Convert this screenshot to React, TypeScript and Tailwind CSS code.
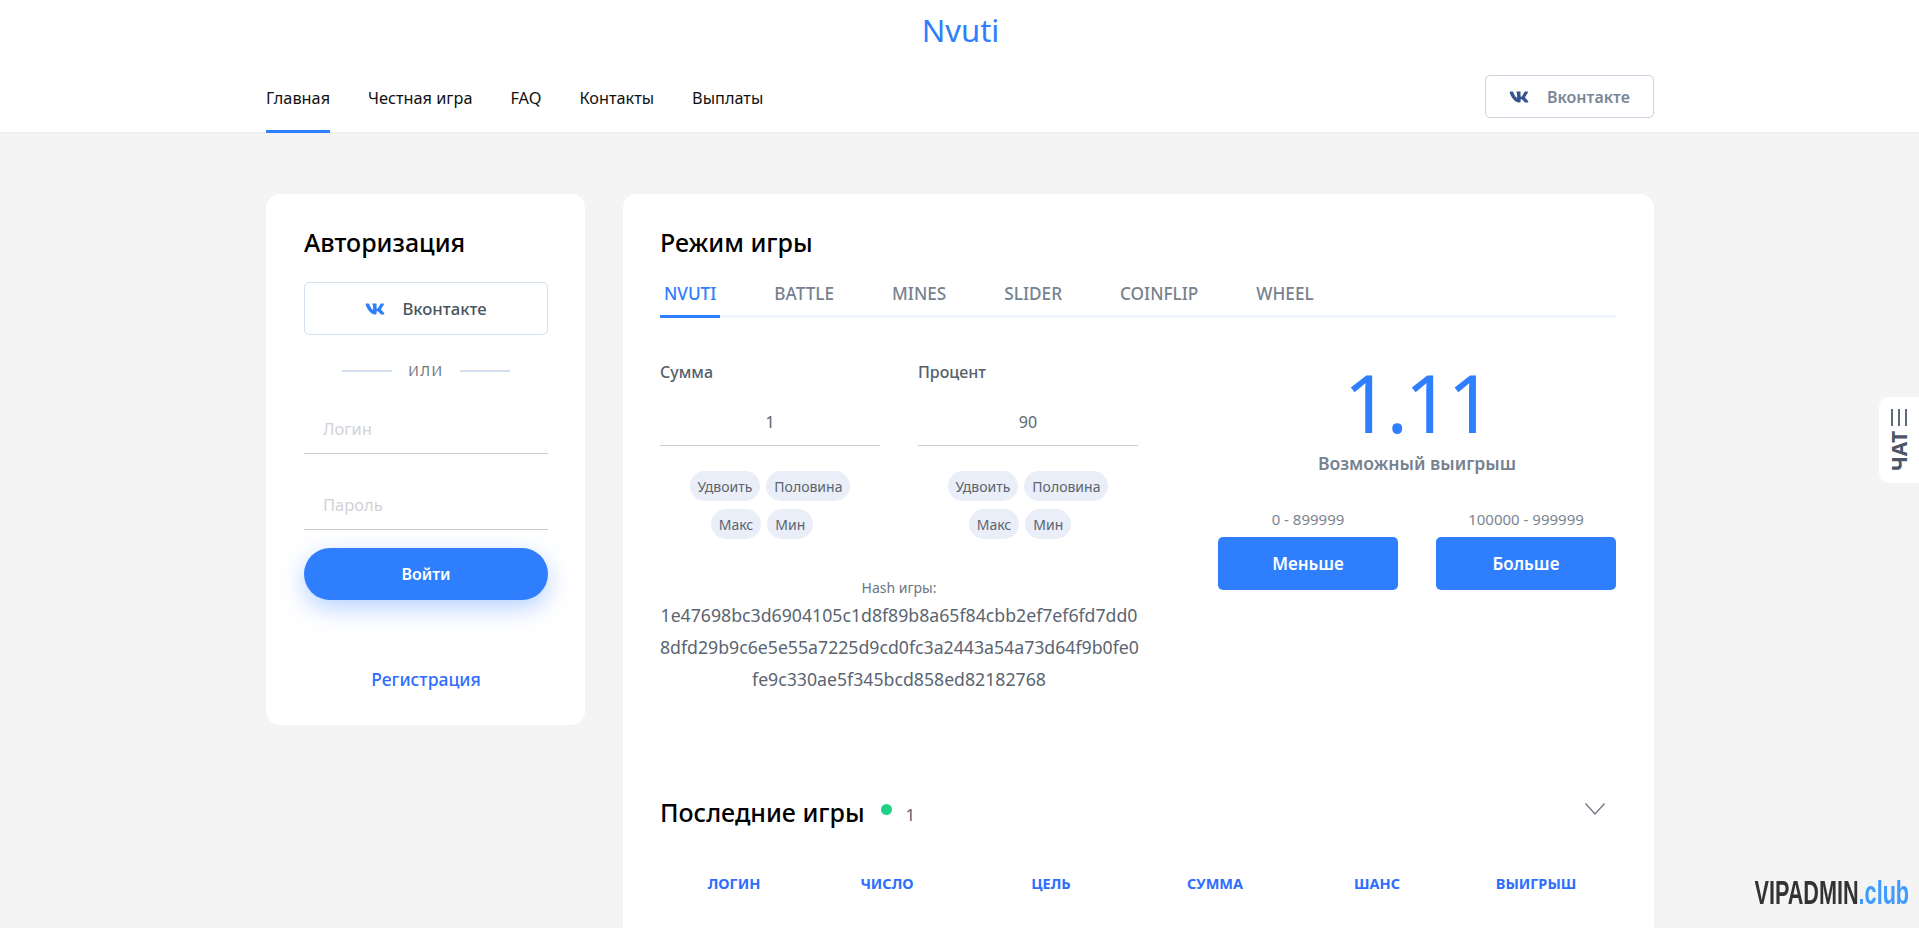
import React from 'react';
import { FaVk } from 'react-icons/fa';

const navItems = ['Главная', 'Честная игра', 'FAQ', 'Контакты', 'Выплаты'];
const tabs = ['NVUTI', 'BATTLE', 'MINES', 'SLIDER', 'COINFLIP', 'WHEEL'];
const hashLines = [
  '1e47698bc3d6904105c1d8f89b8a65f84cbb2ef7ef6fd7dd0',
  '8dfd29b9c6e5e55a7225d9cd0fc3a2443a54a73d64f9b0fe0',
  'fe9c330ae5f345bcd858ed82182768',
];

const Chip = ({ label }: { label: string }) => (
  <button className="h-[30px] rounded-full bg-[#e9eef8] px-[8px] text-[14px] text-[#5b6470]">{label}</button>
);

const AmountField = ({ label, value }: { label: string; value: string }) => (
  <div className="w-[220px]">
    <div className="h-[24px] text-[16px] font-medium leading-[24px] text-[#55606b]">{label}</div>
    <div className="mt-[14px] h-[48px] border-b border-[#cccccc] text-center text-[16px] leading-[48px] text-[#5b6470]">{value}</div>
    <div className="mt-[25px] flex flex-col items-center gap-[8px]">
      <div className="flex gap-[6px]">
        <Chip label="Удвоить" />
        <Chip label="Половина" />
      </div>
      <div className="mr-[16px] flex gap-[6px]">
        <Chip label="Макс" />
        <Chip label="Мин" />
      </div>
    </div>
  </div>
);

const BetColumn = ({ range, label }: { range: string; label: string }) => (
  <div className="w-[180px] text-center">
    <div className="h-[20px] text-[15px] leading-[20px] text-[#7b8591]">{range}</div>
    <button className="mt-[8px] h-[53px] w-full rounded-[5px] bg-[#2e7efe] text-[17px] font-semibold text-white">{label}</button>
  </div>
);

const App: React.FC = () => {
  return (
    <div className="h-[928px] overflow-hidden bg-[#f4f4f4] font-['Noto_Sans','Open_Sans',sans-serif]">
      <header className="h-[133px] border-b border-[#eeeeee] bg-white">
        <div className="pl-[2px] pt-[10px] text-center text-[31px] leading-[40px] text-[#2e7efe]">Nvuti</div>
        <div className="ml-[266px] mt-[25px] flex w-[1388px] items-start justify-between">
          <nav className="flex gap-[38px]">
            {navItems.map((item, i) => (
              <a key={item} className={`h-[58px] pt-[11px] text-[16.3px] leading-[24px] text-[#111111] ${i === 0 ? 'border-b-[3px] border-[#2e7efe]' : ''}`}>
                {item}
              </a>
            ))}
          </nav>
          <button className="flex h-[43px] w-[169px] items-center justify-center gap-[18px] rounded-[5px] border border-[#cbd0dc] text-[16px] font-semibold text-[#7a8798]">
            <FaVk className="text-[20px] text-[#36558f]" />
            Вконтакте
          </button>
        </div>
      </header>

      <main className="ml-[266px] mt-[61px] flex w-[1388px] items-start gap-[38px]">
        <aside className="h-[531px] w-[319px] shrink-0 rounded-[14px] bg-white pl-[38px] pr-[37px] pt-[31px]">
          <h2 className="text-[25px] font-medium leading-[34px] text-black">Авторизация</h2>
          <button className="mt-[23px] flex h-[53px] w-full items-center justify-center gap-[17px] rounded-[5px] border border-[#d3dfec] text-[16.7px] font-medium text-[#4a5560]">
            <FaVk className="text-[20px] text-[#2e7efe]" />
            Вконтакте
          </button>
          <div className="mt-[26px] flex items-center justify-center gap-[16px] text-[14px] leading-[20px] tracking-[1.5px] text-[#6b7480]">
            <span className="h-[2px] w-[50px] bg-[#d3dfec]" />
            ИЛИ
            <span className="h-[2px] w-[50px] bg-[#d3dfec]" />
          </div>
          <input className="mt-[23px] block h-[50px] w-full border-b border-[#cccccc] px-[19px] text-[16.5px] outline-none placeholder:text-[#d2d2d6]" placeholder="Логин" />
          <input className="mt-[26px] block h-[50px] w-full border-b border-[#cccccc] px-[19px] text-[16.5px] outline-none placeholder:text-[#d2d2d6]" placeholder="Пароль" />
          <button className="mt-[18px] h-[52px] w-full rounded-full bg-[#2e7efe] text-[16px] font-semibold text-white shadow-[0_8px_24px_rgba(46,126,254,0.35)]">Войти</button>
          <div className="mt-[67px] text-center text-[17.5px] font-medium leading-[24px] text-[#2e6dfe]">Регистрация</div>
        </aside>

        <section className="h-[800px] flex-1 rounded-[14px] bg-white pl-[37px] pr-[38px] pt-[31px]">
          <h2 className="text-[25px] font-medium leading-[34px] text-black">Режим игры</h2>
          <div className="mt-[21px] flex h-[38px] border-b-[3px] border-[#f1f6fd]">
            {tabs.map((tab, i) => (
              <div key={tab} className={`mr-[50px] h-[38px] px-[4px] pt-[2px] text-[17.2px] font-medium leading-[24px] ${i === 0 ? 'border-b-[3px] border-[#2e7efe] text-[#2e7efe]' : 'text-[#76828f]'}`}>
                {tab}
              </div>
            ))}
          </div>

          <div className="mt-[42px] flex justify-between">
            <div>
              <div className="flex gap-[38px]">
                <AmountField label="Сумма" value="1" />
                <AmountField label="Процент" value="90" />
              </div>
              <div className="mt-[38px] w-[478px] text-center">
                <div className="h-[22px] text-[14px] leading-[22px] text-[#6b7480]">Hash игры:</div>
                {hashLines.map(line => (
                  <div key={line} className="h-[32px] text-[17.7px] leading-[32px] text-[#5b6470]">{line}</div>
                ))}
              </div>
            </div>
            <div className="w-[398px] text-center">
              <div className="-mt-[6px] h-[96px] text-[80px] font-normal leading-[96px] tracking-[-3px] text-[#2e7efe]">1.11</div>
              <div className="mt-[1px] text-[17.6px] font-semibold leading-[24px] text-[#76828f]">Возможный выигрыш</div>
              <div className="mt-[34px] flex justify-between">
                <BetColumn range="0 - 899999" label="Меньше" />
                <BetColumn range="100000 - 999999" label="Больше" />
              </div>
            </div>
          </div>

          <div className="mt-[100px] flex items-center justify-between">
            <div className="flex items-center">
              <h2 className="text-[25px] font-medium leading-[34px] text-black">Последние игры</h2>
              <span className="mb-[6px] ml-[16px] h-[11px] w-[11px] rounded-full bg-[#1fd286]" />
              <span className="ml-[14px] mt-[6px] text-[17px] text-[#5b6470]">1</span>
            </div>
            <svg className="-mt-[6px] mr-[11px]" width="20" height="12" viewBox="0 0 20 12" fill="none" stroke="#6b7480" strokeWidth="1.2">
              <path d="M0.5 0.5 L10 11 L19.5 0.5" />
            </svg>
          </div>

          <div className="mt-[44px] flex text-center text-[14.5px] font-bold leading-[20px] text-[#2e6dfe]">
            <div className="ml-[24px] w-[100px]">ЛОГИН</div>
            <div className="ml-[53px] w-[100px]">ЧИСЛО</div>
            <div className="ml-[64px] w-[100px]">ЦЕЛЬ</div>
            <div className="ml-[64px] w-[100px]">СУММА</div>
            <div className="ml-[62px] w-[100px]">ШАНС</div>
            <div className="ml-[59px] w-[100px]">ВЫИГРЫШ</div>
          </div>
        </section>
      </main>

      <div className="fixed right-0 top-[397px] flex h-[86px] w-[40px] flex-col items-center rounded-l-[10px] bg-white pt-[12px]">
        <div className="flex h-[17px] w-[16px] justify-between">
          <span className="h-full w-[2px] bg-[#5f6b7a]" />
          <span className="h-full w-[2px] bg-[#5f6b7a]" />
          <span className="h-full w-[2px] bg-[#5f6b7a]" />
        </div>
        <div className="mt-[5px] rotate-180 text-[21px] font-bold leading-[24px] text-[#4a5568] [writing-mode:vertical-rl]">ЧАТ</div>
      </div>

      <div className="fixed bottom-[18px] right-[10px] origin-right scale-x-[0.636] font-['Liberation_Sans',sans-serif] text-[34px] font-bold leading-[36px] text-[#333333]">
        VIPADMIN<span className="text-[#3d9bff]">.club</span>
      </div>
    </div>
  );
};

export default App;
